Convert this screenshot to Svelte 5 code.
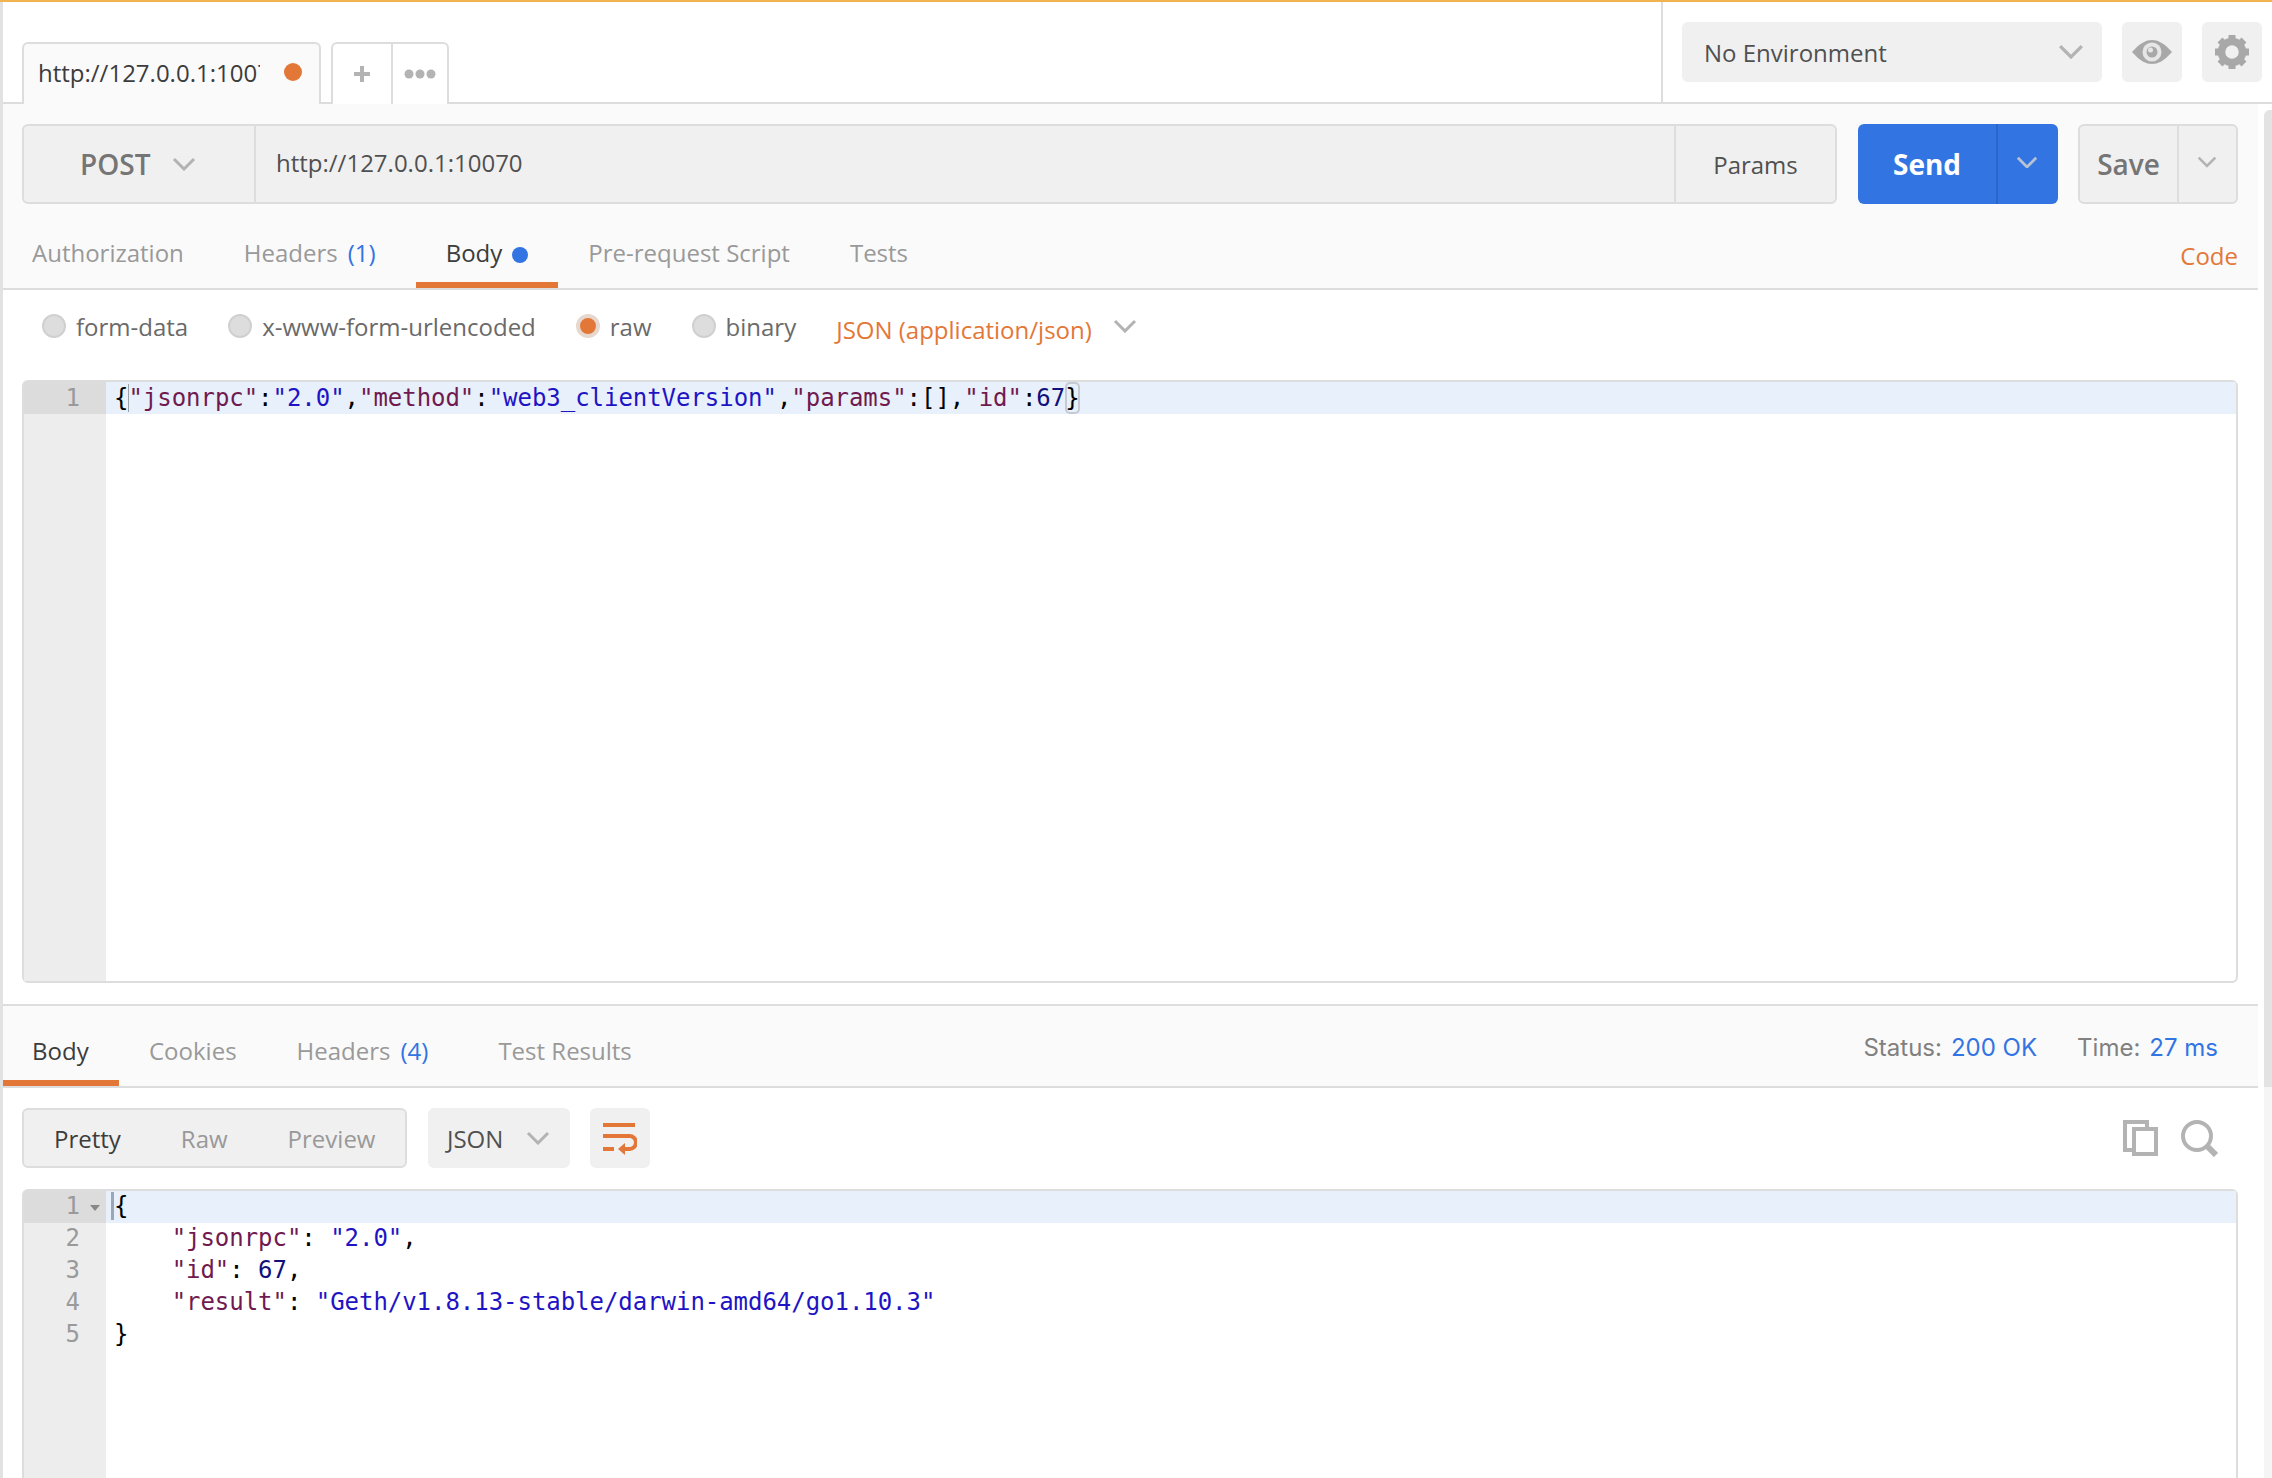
<script>
  const reqTabs = [
    { label: 'Authorization' },
    { label: 'Headers', count: '(1)' },
    { label: 'Body', active: true, dot: true },
    { label: 'Pre-request Script' },
    { label: 'Tests' }
  ];
  const resTabs = [
    { label: 'Body', active: true },
    { label: 'Cookies' },
    { label: 'Headers', count: '(4)' },
    { label: 'Test Results' }
  ];
  const radios = [
    { label: 'form-data' },
    { label: 'x-www-form-urlencoded' },
    { label: 'raw', on: true },
    { label: 'binary' }
  ];
  const responseLines = [1, 2, 3, 4, 5];
  const indent = '    ';
</script>

{#snippet chevron(cls)}
  <svg class="chev {cls}" viewBox="0 0 24 14" fill="none"><path d="M2 2 L12 12 L22 2" stroke="currentColor" stroke-width="3" /></svg>
{/snippet}

<div class="app">
  <div class="strip"></div>
  <div class="main">
    <header class="top">
      <div class="tabstrip">
        <div class="tab">
          <span class="tab-name">http://127.0.0.1:10070</span>
          <span class="tab-dot"></span>
        </div>
        <div class="tab-tools">
          <div class="tool">
            <svg width="18" height="18" viewBox="0 0 18 18"><path d="M9 1v16M1 9h16" stroke="#b3b3b3" stroke-width="4" /></svg>
          </div>
          <div class="tool">
            <svg width="32" height="10" viewBox="0 0 32 10" fill="#b3b3b3"><circle cx="5" cy="5" r="4.5" /><circle cx="16" cy="5" r="4.5" /><circle cx="27" cy="5" r="4.5" /></svg>
          </div>
        </div>
      </div>
      <div class="env-area">
        <div class="env">
          <span>No Environment</span>
          {@render chevron('env-chev')}
        </div>
        <div class="icon-btn">
          <svg width="40" height="24" viewBox="0 0 40 24">
            <path d="M0 12 C8 3 14 0 20 0 C26 0 32 3 40 12 C32 21 26 24 20 24 C14 24 8 21 0 12 Z" fill="#a8a8a8" />
            <circle cx="20" cy="12" r="9.5" fill="#e6e6e6" />
            <circle cx="20" cy="12" r="5.5" fill="#a8a8a8" />
            <circle cx="18.5" cy="10" r="2.5" fill="#e6e6e6" />
          </svg>
        </div>
        <div class="icon-btn">
          <svg width="36" height="36" viewBox="0 0 36 36">
            <circle cx="18" cy="18" r="10.5" fill="none" stroke="#a8a8a8" stroke-width="7.5" />
            <g stroke="#a8a8a8" stroke-width="7">
              <path d="M18 1v7M18 28v7M1 18h7M28 18h7M6 6l5 5M25 25l5 5M6 30l5-5M25 11l5-5" />
            </g>
          </svg>
        </div>
      </div>
    </header>

    <div class="body">
      <div class="panes">
        <section class="request">
          <div class="url-row">
            <div class="url-box">
              <div class="method">
                <span>POST</span>
                {@render chevron('method-chev')}
              </div>
              <div class="url">http://127.0.0.1:10070</div>
              <div class="params">Params</div>
            </div>
            <div class="send">
              <span class="send-label">Send</span>
              <span class="send-more">{@render chevron('send-chev')}</span>
            </div>
            <div class="save">
              <span class="save-label">Save</span>
              <span class="save-more">{@render chevron('save-chev')}</span>
            </div>
          </div>
          <nav class="tabs req-tabs">
            {#each reqTabs as t}
              <div class="tabitem" class:active={t.active} class:counted={t.count}>
                {t.label}
                {#if t.count}<span class="count">{t.count}</span>{/if}
                {#if t.dot}<span class="blue-dot"></span>{/if}
              </div>
            {/each}
            <span class="code-link">Code</span>
          </nav>
        </section>

        <div class="radios">
          {#each radios as r}
            <label class="radio">
              <span class="circle" class:on={r.on}></span>
              {r.label}
            </label>
          {/each}
          <span class="content-type">JSON (application/json)</span>
          {@render chevron('type-chev')}
        </div>

        <div class="editor req-editor">
          <div class="gutter">
            <div class="num current">1</div>
          </div>
          <div class="lines">
            <div class="line current"><span class="brace-l">{'{'}</span><span class="k">"jsonrpc"</span>:<span class="s">"2.0"</span>,<span class="k">"method"</span>:<span class="s">"web3_clientVersion"</span>,<span class="k">"params"</span>:[],<span class="k">"id"</span>:<span class="n">67</span><span class="brace-r">{'}'}</span></div>
          </div>
        </div>

        <section class="response">
          <nav class="tabs res-tabs">
            {#each resTabs as t}
              <div class="tabitem" class:active={t.active} class:counted={t.count}>
                {t.label}
                {#if t.count}<span class="count">{t.count}</span>{/if}
              </div>
            {/each}
            <div class="stats">
              <span>Status:</span><b>200 OK</b>
              <span class="time">Time:</span><b>27 ms</b>
            </div>
          </nav>

          <div class="res-tools">
            <div class="modes">
              <span class="mode on">Pretty</span>
              <span class="mode">Raw</span>
              <span class="mode">Preview</span>
            </div>
            <div class="format">
              <span>JSON</span>
              {@render chevron('format-chev')}
            </div>
            <div class="wrap">
              <svg width="34" height="34" viewBox="0 0 34 34" fill="none" stroke="#e37738" stroke-width="4">
                <path d="M0 4H32M0 15H26.5A6.5 6.5 0 0 1 26.5 28H20M0 28H11" />
                <path d="M15 28L22 22V34Z" fill="#e37738" stroke="none" />
              </svg>
            </div>
            <div class="res-icons">
              <svg width="35" height="36" viewBox="0 0 35 36" fill="none" stroke="#b3b3b3" stroke-width="4">
                <path d="M24 8V2H2v28h8" />
                <path d="M11 9h22v25H11z" />
              </svg>
              <svg width="37" height="37" viewBox="0 0 37 37" fill="none" stroke="#b3b3b3">
                <circle cx="16" cy="16" r="14" stroke-width="4" />
                <path d="M25 25l10 10" stroke-width="6" />
              </svg>
            </div>
          </div>

          <div class="editor res-editor">
            <div class="gutter">
              {#each responseLines as n}
                <div class="num" class:current={n === 1}>{n}{#if n === 1}<i class="fold"></i>{/if}</div>
              {/each}
            </div>
            <div class="lines">
              <div class="line current"><span class="cursor">{'{'}</span></div>
              <div class="line">{indent}<span class="k">"jsonrpc"</span>: <span class="s">"2.0"</span>,</div>
              <div class="line">{indent}<span class="k">"id"</span>: <span class="n">67</span>,</div>
              <div class="line">{indent}<span class="k">"result"</span>: <span class="s">"Geth/v1.8.13-stable/darwin-amd64/go1.10.3"</span></div>
              <div class="line">{'}'}</div>
            </div>
          </div>
        </section>
      </div>
      <div class="scrollbar"><div class="thumb"></div></div>
    </div>
  </div>
</div>

<style>
  :global(body) {
    margin: 0;
    background: #fff;
  }

  .app {
    width: 2272px;
    height: 1478px;
    overflow: hidden;
    display: flex;
    box-sizing: border-box;
    border-top: 2px solid #f0b34e;
    font-family: "Open Sans", sans-serif;
    font-size: 24px;
    color: #505050;
  }

  .strip {
    width: 3px;
    flex: none;
    background: #e2e2e2;
  }

  .main {
    flex: 1;
    min-width: 0;
    display: flex;
    flex-direction: column;
  }

  .top {
    height: 100px;
    flex: none;
    display: flex;
    justify-content: space-between;
    border-bottom: 2px solid #ddd;
  }

  .tabstrip {
    display: flex;
    align-items: flex-end;
    gap: 10px;
    padding-left: 19px;
    margin-bottom: -2px;
  }

  .tab {
    width: 299px;
    height: 62px;
    box-sizing: border-box;
    display: flex;
    align-items: center;
    justify-content: space-between;
    padding: 0 17px 4px 14px;
    background: #fafafa;
    border: 2px solid #ddd;
    border-bottom: none;
    border-radius: 6px 6px 0 0;
    color: #3c3c3c;
  }

  .tab-name {
    width: 222px;
    overflow: hidden;
    white-space: nowrap;
  }

  .tab-dot {
    width: 18px;
    height: 18px;
    border-radius: 50%;
    background: #e37738;
  }

  .tab-tools {
    display: flex;
    width: 118px;
    height: 62px;
    box-sizing: border-box;
    border: 2px solid #ddd;
    border-bottom: none;
    border-radius: 6px 6px 0 0;
    background: #fff;
  }

  .tool {
    width: 58px;
    display: flex;
    align-items: center;
    justify-content: center;
  }

  .tool + .tool {
    flex: 1;
    width: auto;
    border-left: 2px solid #ddd;
  }

  .env-area {
    width: 611px;
    box-sizing: border-box;
    border-left: 2px solid #ddd;
    padding: 20px 10px 0 19px;
    display: flex;
    align-items: flex-start;
    gap: 20px;
  }

  .env {
    width: 420px;
    height: 60px;
    box-sizing: border-box;
    display: flex;
    align-items: center;
    justify-content: space-between;
    padding: 0 18px 0 22px;
    background: #f0f0f0;
    border-radius: 6px;
    color: #505050;
  }

  .icon-btn {
    width: 60px;
    height: 60px;
    display: flex;
    align-items: center;
    justify-content: center;
    background: #f0f0f0;
    border-radius: 6px;
  }

  .chev {
    display: block;
    color: #b3b3b3;
    flex: none;
  }

  .env-chev { width: 26px; }
  .method-chev { width: 24px; margin-left: 1px; }
  .send-chev { width: 22px; color: #b7c2d2; margin-right: 2px; }
  .save-chev { width: 20px; margin-right: 2px; }
  .type-chev { width: 24px; margin-left: 21px; }
  .format-chev { width: 24px; }

  .body {
    flex: 1;
    min-height: 0;
    display: flex;
  }

  .panes {
    width: 2255px;
    flex: none;
    display: flex;
    flex-direction: column;
  }

  .panes > * {
    flex: none;
  }

  .scrollbar {
    width: 8px;
    margin-left: 6px;
    margin-top: 6px;
    background: #f5f5f5;
    border-radius: 6px 0 0 0;
    overflow: hidden;
  }

  .thumb {
    height: 977px;
    background: #e3e3e3;
  }

  .request {
    background: #fafafa;
  }

  .url-row {
    display: flex;
    padding: 20px 20px 0 19px;
    height: 80px;
  }

  .url-box {
    width: 1815px;
    box-sizing: border-box;
    display: flex;
    background: #f0f0f0;
    border: 2px solid #ddd;
    border-radius: 6px;
  }

  .method {
    width: 232px;
    box-sizing: border-box;
    display: flex;
    align-items: center;
    padding-left: 56px;
    gap: 21px;
    border-right: 2px solid #ddd;
    font-size: 28px;
    font-weight: 600;
    color: #757575;
  }

  .url {
    flex: 1;
    padding: 0 0 4px 20px;
    display: flex;
    align-items: center;
    color: #505050;
  }

  .params {
    width: 159px;
    display: flex;
    align-items: center;
    justify-content: center;
    border-left: 2px solid #ddd;
  }

  .send {
    width: 200px;
    margin-left: 21px;
    display: flex;
    background: #3374e3;
    border-radius: 6px;
    color: #fff;
    font-size: 28px;
    font-weight: 700;
  }

  .send-label {
    width: 138px;
    display: flex;
    align-items: center;
    justify-content: center;
    border-right: 2px solid #2c66cb;
  }

  .send-more {
    flex: 1;
    display: flex;
    align-items: center;
    justify-content: center;
    padding-bottom: 4px;
  }

  .save {
    width: 160px;
    margin-left: 20px;
    box-sizing: border-box;
    display: flex;
    background: #f0f0f0;
    border: 2px solid #ddd;
    border-radius: 6px;
    color: #757575;
    font-size: 28px;
    font-weight: 600;
  }

  .save-label {
    width: 97px;
    display: flex;
    align-items: center;
    justify-content: center;
    border-right: 2px solid #ddd;
  }

  .save-more {
    flex: 1;
    display: flex;
    align-items: center;
    justify-content: center;
    padding-bottom: 4px;
  }

  .tabs {
    display: flex;
    border-bottom: 2px solid #ddd;
    color: #999;
  }

  .req-tabs {
    height: 84px;
    align-items: flex-end;
    position: relative;
  }

  .tabitem {
    box-sizing: border-box;
    height: 62px;
    padding: 10px 30px 0;
    display: flex;
    align-items: flex-start;
    gap: 10px;
    white-space: nowrap;
  }

  .tabitem.counted {
    padding-right: 40px;
  }

  .req-tabs .tabitem:first-child {
    padding-left: 29px;
  }

  .tabitem.active {
    color: #3c3c3c;
    border-bottom: 6px solid #e37738;
  }

  .count {
    color: #3374e3;
  }

  .blue-dot {
    width: 16px;
    height: 16px;
    margin-top: 11px;
    border-radius: 50%;
    background: #3374e3;
  }

  .code-link {
    margin-left: auto;
    margin-right: 20px;
    padding-bottom: 16px;
    color: #e37738;
  }

  .radios {
    height: 90px;
    box-sizing: border-box;
    display: flex;
    align-items: center;
    padding: 0 0 18px 39px;
  }

  .radio {
    display: flex;
    align-items: center;
    gap: 10px;
    margin-right: 40px;
    color: #6a6a6a;
  }

  .circle {
    width: 24px;
    height: 24px;
    box-sizing: border-box;
    border-radius: 50%;
    background: #ddd;
    border: 2px solid #d0d0d0;
  }

  .circle.on {
    background: #e37738;
    border: 4px solid #e6d8ce;
  }

  .content-type {
    margin-top: 6px;
    color: #e37738;
  }

  .editor {
    margin: 0 20px 0 19px;
    display: flex;
    box-sizing: border-box;
    border: 2px solid #ddd;
    border-radius: 6px;
    background: #fff;
    font-family: "DejaVu Sans Mono", monospace;
    font-size: 24px;
    line-height: 32px;
    letter-spacing: -0.04px;
  }

  .req-editor {
    height: 603px;
  }

  .gutter {
    width: 82px;
    flex: none;
    background: #ededed;
    color: #9a9a9a;
  }

  .num {
    height: 32px;
    padding-right: 26px;
    text-align: right;
    position: relative;
  }

  .num.current {
    background: #dcdcdc;
  }

  .fold {
    position: absolute;
    right: 6px;
    top: 14px;
    border-top: 6px solid #888;
    border-left: 5px solid transparent;
    border-right: 5px solid transparent;
  }

  .lines {
    flex: 1;
    color: #000;
  }

  .line {
    height: 32px;
    padding-left: 8px;
    white-space: pre;
  }

  .line.current {
    background: #e8f0fb;
  }

  .k { color: #701a4f; }
  .s { color: #1f14c4; }
  .n { color: #10107a; }

  .brace-l {
    box-shadow: 1px 0 0 #9aa0a8;
  }

  .brace-r {
    display: inline-block;
    height: 32px;
    box-shadow: inset 0 0 0 2px #c6cad2;
    border-radius: 5px;
  }

  .cursor {
    box-shadow: -3px 0 0 #9aa7b8;
  }

  .response {
    margin-top: 21px;
    border-top: 2px solid #ddd;
  }

  .res-tabs {
    height: 82px;
    box-sizing: border-box;
    align-items: flex-end;
    background: #fafafa;
  }

  .res-tabs .tabitem {
    height: 58px;
    padding-top: 6px;
  }

  .res-tabs .tabitem:first-child {
    width: 116px;
    padding: 6px 29px 0;
  }

  .stats {
    margin-left: auto;
    margin-right: 40px;
    margin-top: 3px;
    align-self: center;
    display: flex;
    gap: 9px;
    font-family: Inter, sans-serif;
    color: #808080;
  }

  .stats b {
    font-weight: 400;
    color: #3374e3;
  }

  .time {
    margin-left: 31px;
  }

  .res-tools {
    display: flex;
    align-items: center;
    height: 60px;
    margin: 20px 20px 21px 19px;
    gap: 20px;
  }

  .modes {
    width: 385px;
    height: 60px;
    box-sizing: border-box;
    display: flex;
    align-items: center;
    padding-left: 30px;
    gap: 60px;
    background: #f0f0f0;
    border: 2px solid #ddd;
    border-radius: 6px;
    color: #999;
  }

  .mode.on {
    color: #3c3c3c;
  }

  .format {
    width: 142px;
    height: 60px;
    margin-left: 1px;
    box-sizing: border-box;
    display: flex;
    align-items: center;
    justify-content: space-between;
    padding: 0 20px 0 19px;
    background: #f0f0f0;
    border-radius: 6px;
  }

  .wrap {
    width: 60px;
    height: 60px;
    display: flex;
    align-items: center;
    justify-content: center;
    background: #f0f0f0;
    border-radius: 6px;
  }

  .res-icons {
    margin-left: auto;
    display: flex;
    gap: 23px;
    margin-right: 20px;
  }

  .res-editor {
    height: 320px;
    border-bottom: none;
    border-radius: 6px 6px 0 0;
    line-height: 30px;
  }
</style>
